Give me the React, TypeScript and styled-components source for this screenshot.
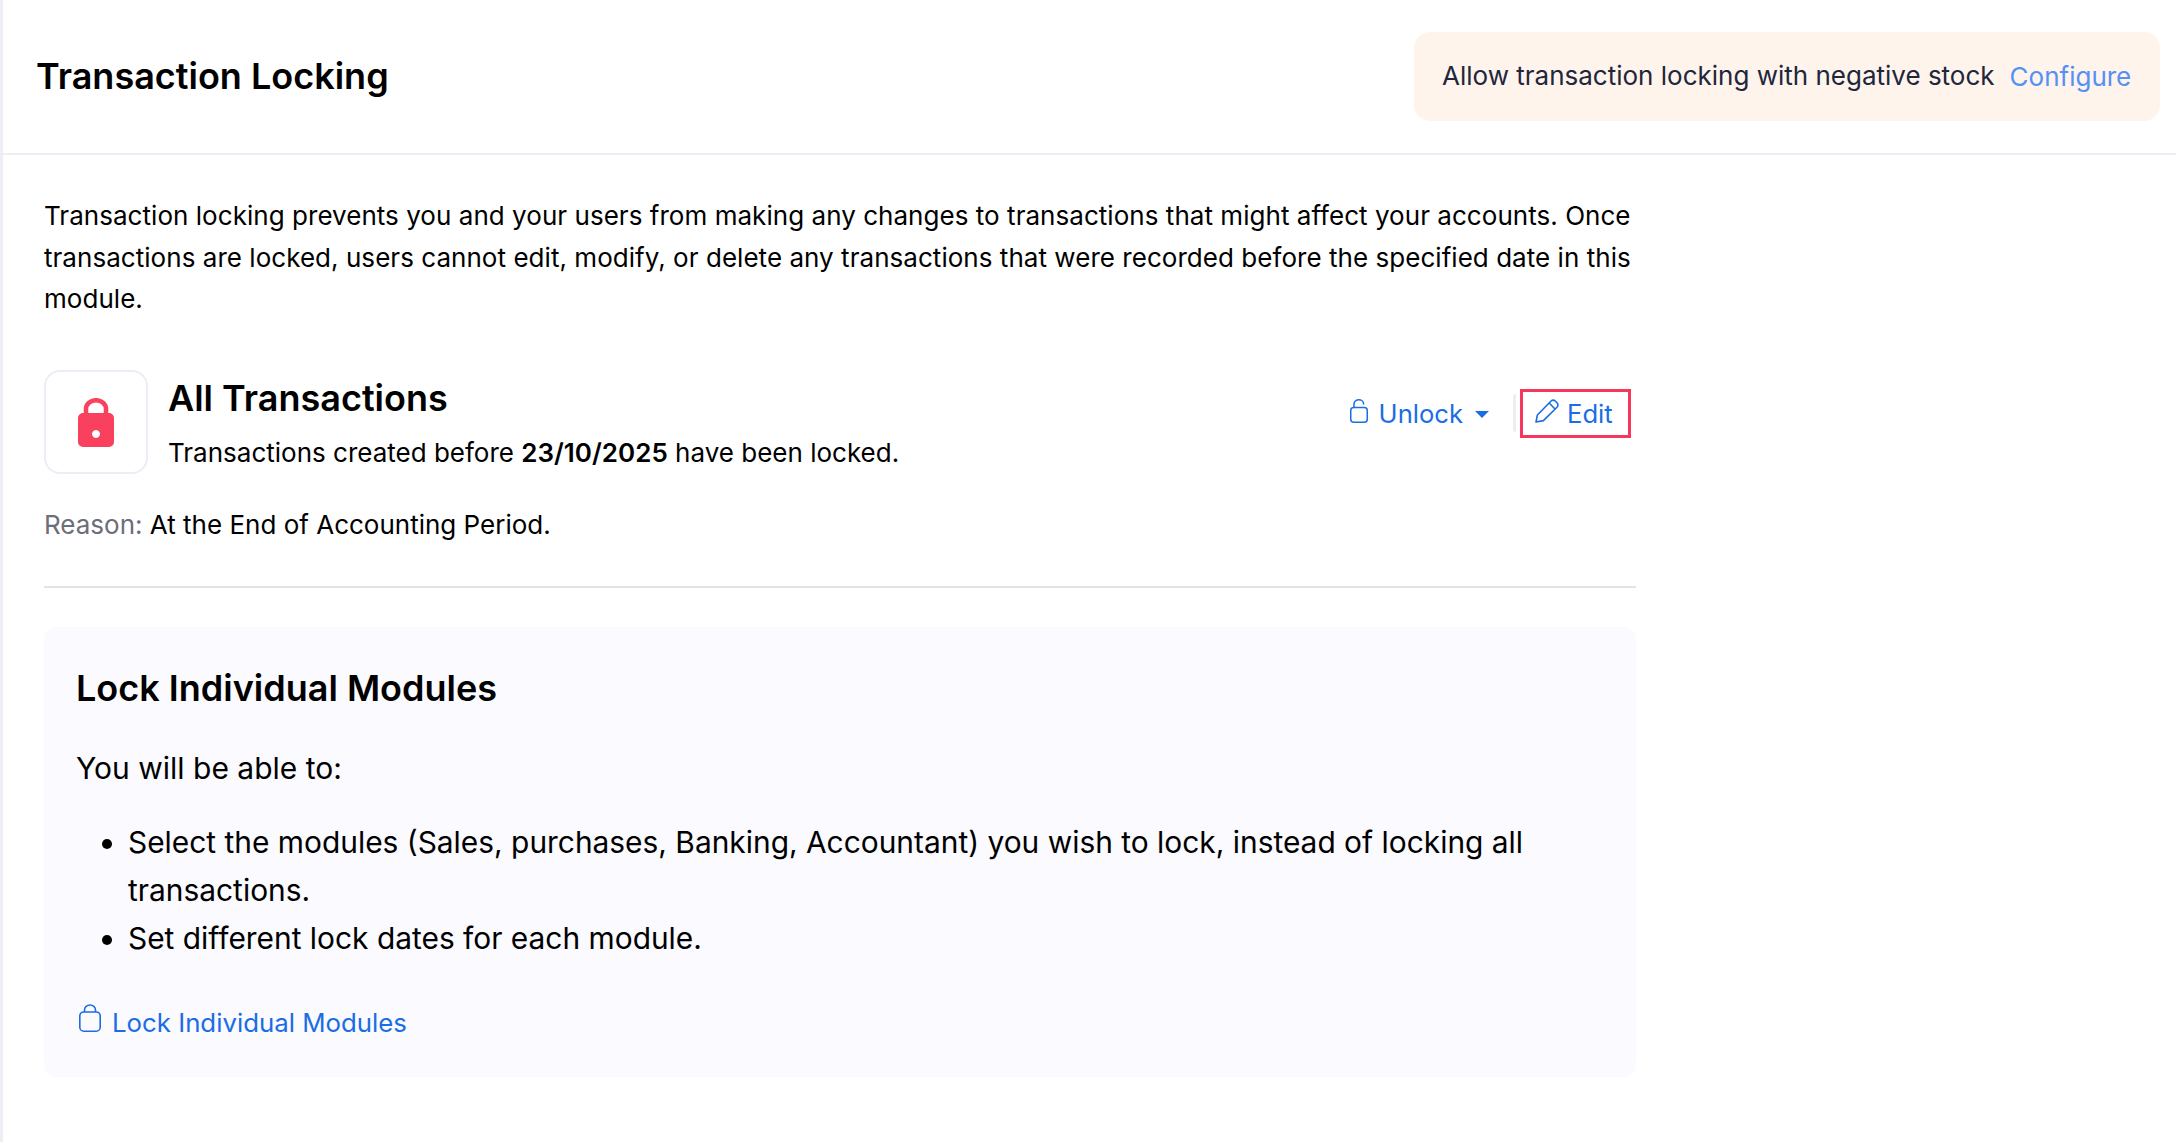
import React from 'react';
import styled, {createGlobalStyle} from 'styled-components';

const GlobalStyle = createGlobalStyle`
  html, body {
    margin: 0;
    padding: 0;
    background: #fff;
  }
  body {
    font-family: Inter, "Liberation Sans", sans-serif;
    color: #000;
  }
`;

const Page = styled.div`
  min-height: 1142px;
  box-sizing: border-box;
  border-left: 3px solid #eeedf6;
`;

const Header = styled.header`
  height: 155px;
  box-sizing: border-box;
  border-bottom: 2px solid #eeedf6;
  display: flex;
  align-items: center;
  justify-content: space-between;
  padding: 0 16px 2px 33px;
`;

const Title = styled.h1`
  margin: 0;
  font-size: 36px;
  font-weight: 600;
  line-height: 44px;
`;

const Notice = styled.div`
  width: 746px;
  height: 89px;
  box-sizing: border-box;
  margin-top: 2px;
  display: flex;
  align-items: center;
  gap: 15px;
  padding: 0 28px 3px;
  background: #fef4eb;
  border-radius: 16px;
  font-size: 26px;
  color: #21263c;
`;

const NoticeLink = styled.a`
  color: #5590f6;
  padding-top: 3px;
`;

const Content = styled.main`
  width: 1592px;
  padding: 40px 0 0 41px;
`;

const Intro = styled.p`
  margin: 0;
  font-size: 26px;
  line-height: 41.6px;
  letter-spacing: .04px;
`;

const LockRow = styled.section`
  display: flex;
  align-items: center;
  margin-top: 50px;
`;

const LockBadge = styled.div`
  width: 104px;
  height: 104px;
  box-sizing: border-box;
  border: 2px solid #eeedf6;
  border-radius: 16px;
  display: flex;
  align-items: center;
  justify-content: center;
  flex-shrink: 0;
`;

const LockText = styled.div`
  margin-left: 20px;
  margin-right: auto;
`;

const LockTitle = styled.h2`
  margin: 2px 0 0;
  font-size: 36px;
  font-weight: 600;
  line-height: 50px;
`;

const LockInfo = styled.div`
  margin-top: 10px;
  font-size: 26px;
  line-height: 40px;

  > strong {
    font-weight: 600;
  }
`;

const Actions = styled.div`
  display: flex;
  align-items: center;
  color: #1a6de3;
  font-size: 25.6px;
  margin-top: -17px;
  margin-right: 5px;
`;

const ActionLink = styled.a`
  display: flex;
  align-items: baseline;
  padding-top: 1px;
`;

const Caret = styled.span`
  align-self: center;
  width: 0;
  height: 0;
  margin: 2px 0 0 12px;
  border-left: 7px solid transparent;
  border-right: 7px solid transparent;
  border-top: 7px solid #1a6de3;
`;

const Separator = styled.span`
  width: 3px;
  height: 38px;
  margin-left: 24px;
  margin-right: 4px;
  background: #eeeeee;
  border-radius: 3px 0 0 3px;
`;

const EditLink = styled.a`
  display: flex;
  align-items: baseline;
  gap: 8px;
  width: 111px;
  height: 49px;
  box-sizing: border-box;
  padding: 6px 0 0 12px;
  border: 3px solid #f7365c;
`;

const Reason = styled.div`
  margin-top: 31px;
  font-size: 26px;
  line-height: 40px;

  > span {
    color: #6c6e7a;
  }
`;

const Divider = styled.hr`
  margin: 41px 0 39px;
  border: 0;
  height: 2px;
  background: #e3e3e6;
`;

const ModuleCard = styled.section`
  height: 450px;
  box-sizing: border-box;
  padding: 39px 32px 0;
  background: #fafaff;
  border-radius: 12px;
`;

const ModuleTitle = styled.h3`
  margin: 0;
  font-size: 36px;
  font-weight: 600;
  line-height: 44px;
`;

const ModuleLead = styled.p`
  margin: 36px 0 0;
  font-size: 30px;
  line-height: 44px;
`;

const ModuleList = styled.ul`
  margin: 28px 0 0;
  padding-left: 52px;
  font-size: 29.9px;
  line-height: 48px;
`;

const ModuleLink = styled.a`
  display: flex;
  align-items: baseline;
  gap: 11px;
  margin-top: 42px;
  color: #1a6de3;
  font-size: 25.8px;
  line-height: 36px;
  padding-left: 3px;
`;

const LockFilled: React.FC = () => (
  <svg width="36" height="49" viewBox="0 0 36 49" style={{marginTop: 2}}>
    <path fill="none" stroke="#f9405f" strokeWidth="4.5" d="M8 17 V11 a10 8.8 0 0 1 20 0 V17"/>
    <path fill="#f9405f" fillRule="evenodd" d="M5 15 H31 a5 5 0 0 1 5 5 V44 a5 5 0 0 1 -5 5 H5 a5 5 0 0 1 -5 -5 V20 a5 5 0 0 1 5 -5 Z M18 32 a4 4 0 1 0 0.01 0 Z"/>
  </svg>
);

const LockOpen: React.FC = () => (
  <svg width="18" height="24" viewBox="0 0 18 24" fill="none" stroke="#1a6de3" strokeWidth="1.5" style={{marginRight: 11}}>
    <rect x=".75" y="8.5" width="16.5" height="14.75" rx="3"/>
    <path d="M4 8.5 V5 a4.8 4.2 0 0 1 9.6 0 V5.5"/>
  </svg>
);

const LockClosed: React.FC = () => (
  <svg width="22" height="28" viewBox="0 0 22 28" fill="none" stroke="#1a6de3" strokeWidth="1.6">
    <rect x=".8" y="8" width="20.4" height="19.2" rx="4"/>
    <path d="M5.5 8 V6 a5.5 5 0 0 1 11 0 V8"/>
  </svg>
);

const Pencil: React.FC = () => (
  <svg width="24" height="24" viewBox="0 0 24 24" fill="none" stroke="#1a6de3" strokeWidth="1.6" strokeLinejoin="round">
    <path d="M1 23 L2.4 16 L15.8 2.2 a3 3 0 0 1 4.4 -.2 L22 3.8 a3 3 0 0 1 0 4.4 L8.4 21.6 Z"/>
    <path d="M14.2 4 L20 10"/>
  </svg>
);

const App: React.FC = () => {
  return (
    <Page>
      <GlobalStyle/>
      <Header>
        <Title>Transaction Locking</Title>
        <Notice>
          <span>Allow transaction locking with negative stock</span>
          <NoticeLink>Configure</NoticeLink>
        </Notice>
      </Header>
      <Content>
        <Intro>
          Transaction locking prevents you and your users from making any changes to transactions that might affect your accounts. Once transactions are locked, users cannot edit, modify, or delete any transactions that were recorded before the specified date in this module.
        </Intro>
        <LockRow>
          <LockBadge><LockFilled/></LockBadge>
          <LockText>
            <LockTitle>All Transactions</LockTitle>
            <LockInfo>Transactions created before <strong>23/10/2025</strong> have been locked.</LockInfo>
          </LockText>
          <Actions>
            <ActionLink><LockOpen/>Unlock<Caret/></ActionLink>
            <Separator/>
            <EditLink><Pencil/>Edit</EditLink>
          </Actions>
        </LockRow>
        <Reason><span>Reason:</span> At the End of Accounting Period.</Reason>
        <Divider/>
        <ModuleCard>
          <ModuleTitle>Lock Individual Modules</ModuleTitle>
          <ModuleLead>You will be able to:</ModuleLead>
          <ModuleList>
            <li>Select the modules (Sales, purchases, Banking, Accountant) you wish to lock, instead of locking all transactions.</li>
            <li>Set different lock dates for each module.</li>
          </ModuleList>
          <ModuleLink><LockClosed/>Lock Individual Modules</ModuleLink>
        </ModuleCard>
      </Content>
    </Page>
  );
};

export default App;
